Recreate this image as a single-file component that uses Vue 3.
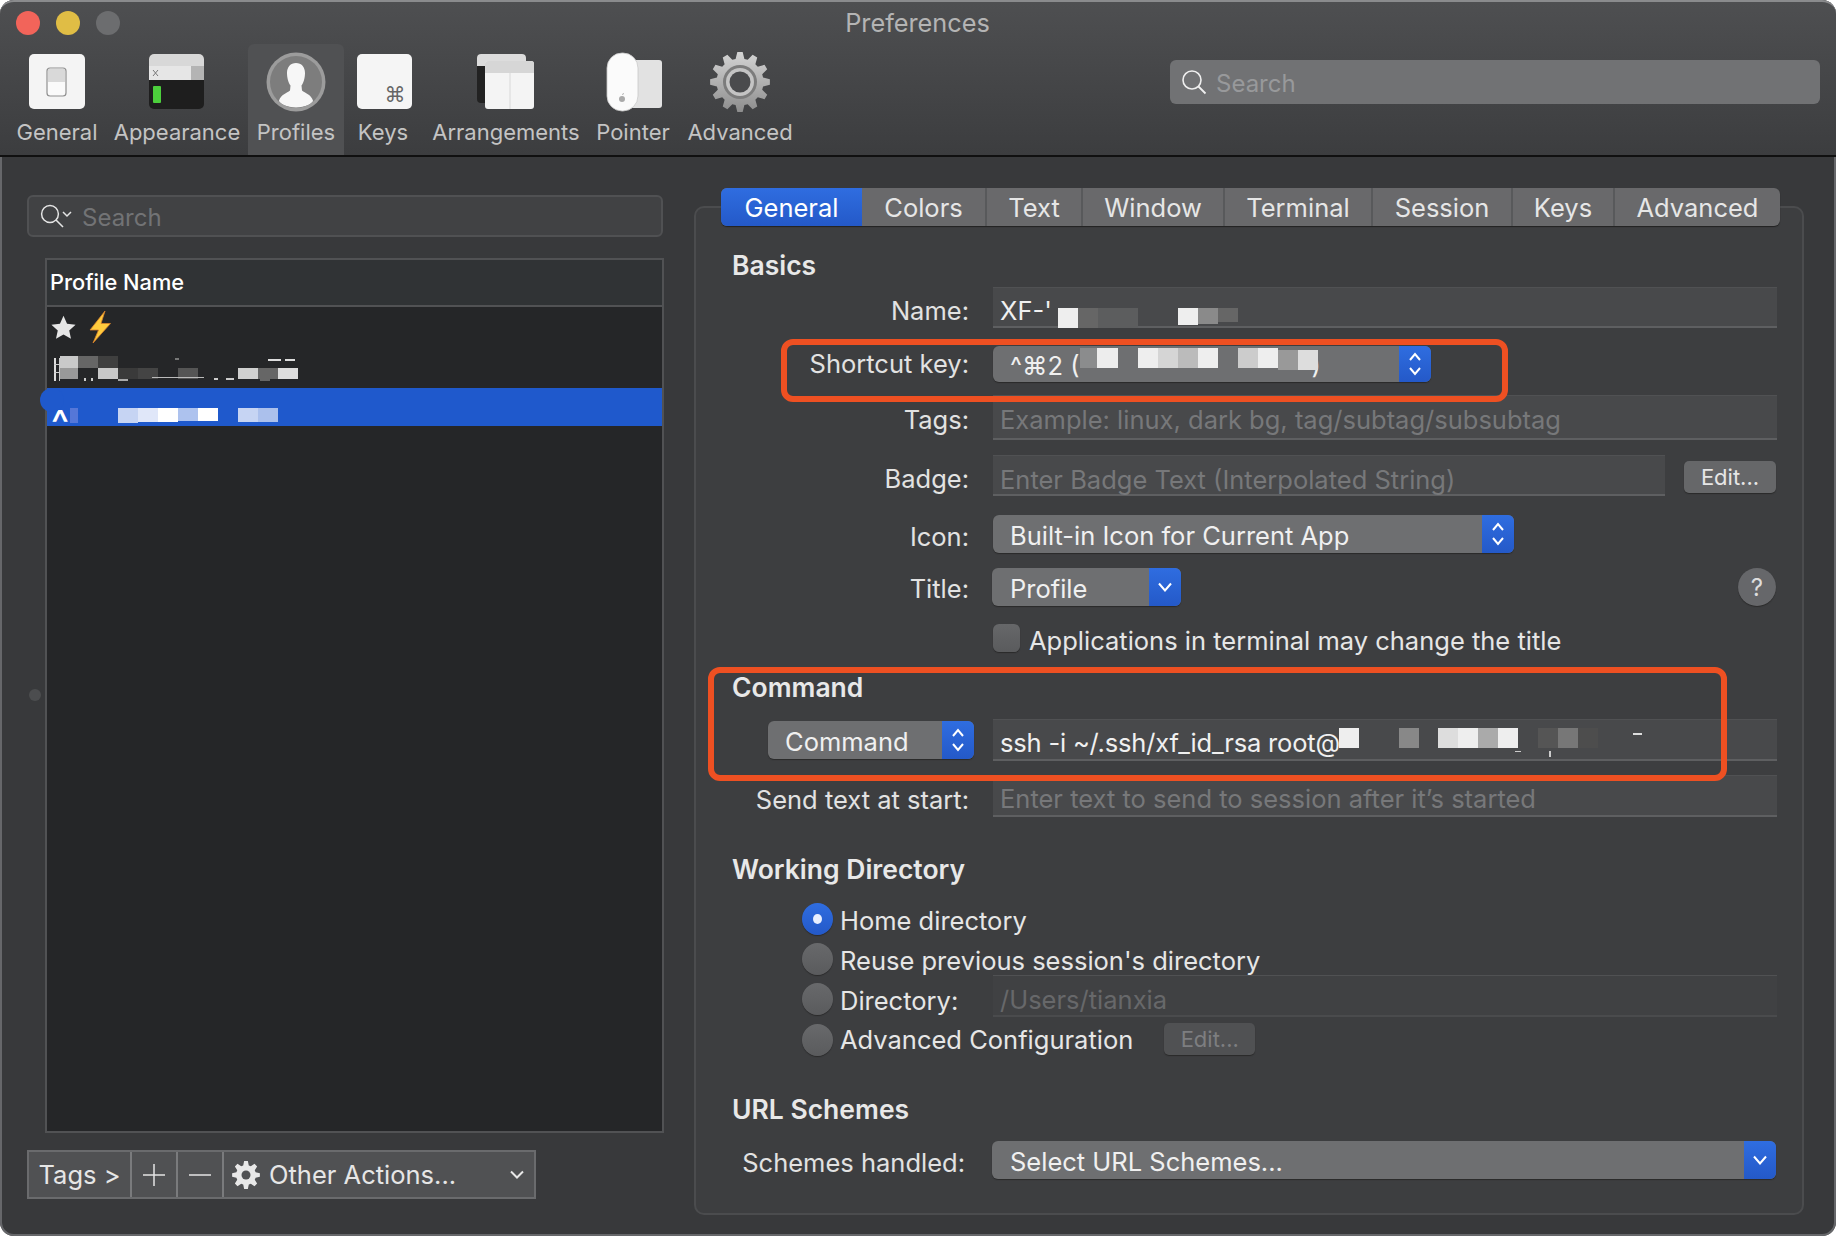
<script setup>
const tools = [
  { name: 'General', w: 98 }, { name: 'Appearance', w: 142 }, { name: 'Profiles', w: 96, active: true },
  { name: 'Keys', w: 78 }, { name: 'Arrangements', w: 168 }, { name: 'Pointer', w: 86 }, { name: 'Advanced', w: 128 }
]
const tabs = [
  { name: 'General', w: 141, active: true }, { name: 'Colors', w: 125 }, { name: 'Text', w: 96 }, { name: 'Window', w: 142 },
  { name: 'Terminal', w: 148 }, { name: 'Session', w: 140 }, { name: 'Keys', w: 102 }, { name: 'Advanced', w: 165 }
]
function gear(cx, cy, ro, ri, n) {
  const pts = []
  const step = (Math.PI * 2) / n
  for (let i = 0; i < n; i++) {
    const a = i * step - Math.PI / 2
    const p = (r, d) => `${(cx + r * Math.cos(a + d)).toFixed(2)} ${(cy + r * Math.sin(a + d)).toFixed(2)}`
    pts.push(p(ri, -step * 0.36), p(ro, -step * 0.17), p(ro, step * 0.17), p(ri, step * 0.36))
  }
  return 'M' + pts.join('L') + 'Z'
}
const bigGear = gear(30, 30, 30, 23.5, 12)
const smallGear = gear(14, 14, 14, 10, 8)
const mosaic = [
  [60, 356, 18, 12, '#c9c9c9'], [78, 356, 20, 12, '#666'], [98, 356, 20, 12, '#3f3f3f'],
  [60, 368, 18, 11, '#999'], [98, 368, 20, 11, '#c8c8c8'], [118, 368, 20, 11, '#3a3a3a'], [138, 368, 20, 11, '#444'], [178, 368, 20, 11, '#555'],
  [238, 368, 20, 11, '#d0d0d0'], [258, 368, 20, 11, '#666'], [278, 368, 20, 11, '#ddd'],
  [54, 358, 2, 23, '#ddd'], [59, 358, 1, 23, '#ccc'], [54, 364, 6, 1, '#ccc'], [54, 372, 6, 1, '#ccc'],
  [268, 359, 13, 2, '#ddd'], [285, 359, 10, 2, '#ddd'], [175, 358, 4, 2, '#777'],
  [84, 378, 2, 3, '#ccc'], [91, 378, 2, 3, '#ccc'], [118, 379, 10, 2, '#aaa'], [152, 377, 52, 1, '#bbb'], [214, 378, 4, 2, '#ccc'], [226, 378, 8, 2, '#ccc'], [260, 379, 10, 2, '#666'],
  [70, 408, 8, 15, '#5577d8'], [118, 408, 20, 15, '#c6d4f3'], [138, 408, 20, 14, '#e0e7f9'], [158, 408, 20, 14, '#fff'],
  [178, 408, 20, 13, '#adc2ee'], [198, 408, 20, 13, '#fff'], [238, 408, 20, 14, '#c6d4f3'], [258, 408, 20, 14, '#abc0ec'],
  [1058, 308, 20, 20, '#eee'], [1078, 308, 20, 20, '#666'], [1098, 308, 40, 20, '#5c5d5e'],
  [1178, 308, 20, 17, '#eee'], [1198, 308, 20, 16, '#8a8a8a'], [1218, 308, 20, 14, '#666'],
  [1097, 348, 21, 20, '#ededed'], [1080, 348, 17, 20, '#8b8c8d'], [1138, 348, 20, 20, '#eee'], [1158, 348, 20, 20, '#d5d5d5'], [1178, 348, 20, 20, '#bbb'],
  [1198, 348, 20, 20, '#eee'], [1238, 348, 20, 20, '#ccc'], [1258, 348, 20, 20, '#eee'], [1278, 350, 20, 20, '#999'], [1298, 350, 20, 20, '#ddd'],
  [1339, 728, 20, 20, '#eee'], [1399, 728, 20, 20, '#888'], [1438, 728, 20, 20, '#ddd'], [1458, 728, 20, 20, '#eee'],
  [1478, 728, 20, 20, '#aaa'], [1498, 728, 20, 20, '#eee'], [1538, 728, 20, 20, '#555'], [1558, 728, 20, 20, '#777'],
  [1578, 728, 20, 20, '#4d4d4d'], [1633, 733, 9, 2, '#ddd'], [1515, 751, 6, 1, '#ccc'], [1549, 751, 2, 6, '#ccc']
]
const blockStyle = (b) => ({ left: b[0] + 'px', top: b[1] + 'px', width: b[2] + 'px', height: b[3] + 'px', background: b[4] })
</script>

<template>
  <div class="window">
    <header class="toolbar">
      <div class="titlebar">
        <span class="light red"></span><span class="light yellow"></span><span class="light gray"></span>
        <span class="wintitle">Preferences</span>
      </div>
      <div class="toolrow">
        <div v-for="t in tools" :key="t.name" class="tool" :class="{ active: t.active }" :style="{ width: t.w + 'px' }">
          <svg class="toolicon" viewBox="0 0 60 60" width="60" height="60">
            <template v-if="t.name === 'General'">
              <rect x="2" y="2" width="56" height="55" rx="5" fill="#f4f4f4" />
              <rect x="20" y="16" width="19" height="28" rx="3" fill="#fafafa" stroke="#8f8f8f" stroke-width="1.2" />
              <path d="M21 17h17v13H21z" fill="#d9d9d9" />
            </template>
            <template v-else-if="t.name === 'Appearance'">
              <rect x="2" y="2" width="55" height="55" rx="5" fill="#1e1e1e" />
              <path d="M2 14V7a5 5 0 0 1 5-5h45a5 5 0 0 1 5 5v7z" fill="#d8d8d8" />
              <rect x="2" y="14" width="42" height="14" fill="#e6e6e6" />
              <rect x="44" y="14" width="13" height="14" fill="#b4b4b4" />
              <path d="M6 18l5 6M11 18l-5 6" stroke="#777" stroke-width="1" />
              <rect x="6" y="34" width="8" height="17" rx="1" fill="#4ccf3c" />
            </template>
            <template v-else-if="t.name === 'Profiles'">
              <defs><clipPath id="pc"><circle cx="30" cy="30" r="26" /></clipPath></defs>
              <circle cx="30" cy="30" r="29.5" fill="#9c9c9c" />
              <circle cx="30" cy="30" r="26" fill="#7d7d7d" />
              <path clip-path="url(#pc)" d="M30 11c5.500 0 9 4 9 10 0 5-1.500 10-3.500 12.500l.5 5c3 2.500 9 4 11 10 0 3-8 7-17 7s-17-4-17-7c2-6 8-7.500 11-10l.5-5C22.500 31 21 26 21 21c0-6 3.500-10 9-10z" fill="#f7f7f7" />
            </template>
            <template v-else-if="t.name === 'Keys'">
              <rect x="4" y="2" width="55" height="55" rx="5" fill="#f5f5f5" />
              <text x="42" y="50" text-anchor="middle" class="cmdglyph">⌘</text>
            </template>
            <template v-else-if="t.name === 'Arrangements'">
              <rect x="1" y="2" width="49" height="49" rx="4" fill="#222" />
              <path d="M1 14V6a4 4 0 0 1 4-4h41a4 4 0 0 1 4 4v8z" fill="#dcdcdc" />
              <rect x="9" y="9" width="49" height="48" rx="3" fill="#f4f4f4" />
              <path d="M9 21v-9a3 3 0 0 1 3-3h43a3 3 0 0 1 3 3v9z" fill="#d6d6d6" />
              <path d="M34 21v36" stroke="#d8d8d8" stroke-width="1" />
            </template>
            <template v-else-if="t.name === 'Pointer'">
              <rect x="27" y="8" width="32" height="48" rx="3" fill="#e2e2e2" />
              <rect x="4" y="1" width="31" height="58" rx="15" fill="#fbfbfb" stroke="#c9c9c9" stroke-width="0.8" />
              <circle cx="19" cy="47" r="3" fill="#aaa" />
              <path d="M19 43c0-1 1-2 2-2 0 1-1 2-2 2z" fill="#aaa" />
            </template>
            <template v-else>
              <defs>
                <linearGradient id="gg" x1="0" y1="0" x2="0" y2="1"><stop offset="0" stop-color="#d4d4d4" /><stop offset="1" stop-color="#8d8d8d" /></linearGradient>
              </defs>
              <path :d="bigGear" fill="url(#gg)" />
              <circle cx="30" cy="30" r="17" fill="#7c7c7c" />
              <circle cx="30" cy="30" r="14" fill="#c4c4c4" />
              <circle cx="30" cy="30" r="10.5" fill="#4a4b4d" />
            </template>
          </svg>
          <span class="toollabel">{{ t.name }}</span>
        </div>
        <div class="topsearch">
          <svg viewBox="0 0 26 26" width="26" height="26"><circle cx="11" cy="11" r="9" fill="none" stroke="#efefef" stroke-width="1.6" /><path d="M17.5 17.5l7 7" stroke="#efefef" stroke-width="1.8" /></svg>
          <span class="stext">Search</span>
        </div>
      </div>
    </header>

    <main class="main">
      <aside class="left">
        <div class="leftsearch">
          <svg viewBox="0 0 34 26" width="34" height="26"><circle cx="10" cy="11" r="8.4" fill="none" stroke="#e4e4e4" stroke-width="1.5" /><path d="M16 17l7 7" stroke="#e4e4e4" stroke-width="1.6" /><path d="M23 9l4 4 4-4" fill="none" stroke="#e4e4e4" stroke-width="1.5" /></svg>
          <span class="stext">Search</span>
        </div>
        <div class="list">
          <div class="listhead">Profile Name</div>
          <div class="listrow first">
            <svg viewBox="0 0 24 24" width="25" height="25"><path d="M12 .8l3.4 7.600 8.200.9-6.100 5.500 1.700 8.100L12 18.800l-7.200 4.100 1.700-8.100L.4 9.300l8.200-.9z" fill="#e6e6e6" /></svg>
            <svg class="bolt" viewBox="0 0 24 32" width="24" height="32"><path d="M17 0L2 19h8.500L5 32 22.500 12.500H13z" fill="#ffcb3d" stroke="#d9822b" stroke-width="0.8" /></svg>
          </div>
          <div class="listrow second"></div>
          <div class="listrow selected"><span class="caret">^</span></div>
        </div>
        <div class="actions">
          <div class="act tags">Tags &gt;</div>
          <div class="act sym"><svg viewBox="0 0 22 22" width="22" height="22"><path d="M11 0v22M0 11h22" stroke="#e4e4e4" stroke-width="1.500" /></svg></div>
          <div class="act sym"><svg viewBox="0 0 22 22" width="22" height="22"><path d="M0 11h22" stroke="#e4e4e4" stroke-width="1.500" /></svg></div>
          <div class="act other">
            <svg viewBox="0 0 28 28" width="28" height="28"><path :d="smallGear" fill="#e8e8e8" /><circle cx="14" cy="14" r="4.500" fill="#505153" /></svg>
            <span>Other Actions...</span>
            <svg class="otherchev" viewBox="0 0 14 10" width="14" height="10"><path d="M1 1.500l6 6 6-6" fill="none" stroke="#e8e8e8" stroke-width="2" /></svg>
          </div>
        </div>
      </aside>

      <section class="right">
        <nav class="tabs">
          <div v-for="t in tabs" :key="t.name" class="tab" :class="{ active: t.active }" :style="{ width: t.w + 'px' }">{{ t.name }}</div>
        </nav>
        <div class="panel">
          <h3 class="head basics">Basics</h3>

          <div class="row" style="--h:41px;--mt:7px">
            <label class="lab down">Name:</label>
            <div class="field val namefield">XF-'</div>
          </div>
          <div class="row" style="--h:36px;--mt:18px">
            <label class="lab up">Shortcut key:</label>
            <div class="popup w438"><span class="ptext">^⌘2 (</span><span class="closeparen">)</span>
              <span class="pbtn"><svg viewBox="0 0 14 26" width="14" height="26"><path d="M2 9l5-6 5 6M2 17l5 6 5-6" fill="none" stroke="#fff" stroke-width="2" /></svg></span>
            </div>
          </div>
          <div class="row" style="--h:45px;--mt:13px">
            <label class="lab tagslab">Tags:</label>
            <div class="field ph">Example: linux, dark bg, tag/subtag/subsubtag</div>
          </div>
          <div class="row" style="--h:41px;--mt:15px">
            <label class="lab down">Badge:</label>
            <div class="field ph badge">Enter Badge Text (Interpolated String)</div>
            <button class="btn edit">Edit...</button>
          </div>
          <div class="row" style="--h:38px;--mt:19px">
            <label class="lab low">Icon:</label>
            <div class="popup w520"><span class="ptext">Built-in Icon for Current App</span>
              <span class="pbtn"><svg viewBox="0 0 14 26" width="14" height="26"><path d="M2 9l5-6 5 6M2 17l5 6 5-6" fill="none" stroke="#fff" stroke-width="2" /></svg></span>
            </div>
          </div>
          <div class="row" style="--h:38px;--mt:15px">
            <label class="lab slight">Title:</label>
            <div class="popup w188"><span class="ptext">Profile</span>
              <span class="pbtn"><svg viewBox="0 0 16 10" width="16" height="10"><path d="M2 1.500l6 7 6-7" fill="none" stroke="#fff" stroke-width="2" /></svg></span>
            </div>
            <div class="help">?</div>
          </div>
          <div class="row" style="--h:28px;--mt:18px">
            <div class="checkcell"><span class="check"></span><span class="txt low2">Applications in terminal may change the title</span></div>
          </div>

          <h3 class="head" style="--mt:20px">Command</h3>
          <div class="row" style="--h:42px;--mt:17px">
            <div class="popup w206 cmd"><span class="ptext">Command</span>
              <span class="pbtn"><svg viewBox="0 0 14 26" width="14" height="26"><path d="M2 9l5-6 5 6M2 17l5 6 5-6" fill="none" stroke="#fff" stroke-width="2" /></svg></span>
            </div>
            <div class="field val cmdfield">ssh -i ~/.ssh/xf_id_rsa root@</div>
          </div>
          <div class="row" style="--h:42px;--mt:14px">
            <label class="lab down">Send text at start:</label>
            <div class="field ph">Enter text to send to session after it’s started</div>
          </div>

          <h3 class="head" style="--mt:37px">Working Directory</h3>
          <div class="row radio" style="--h:32px;--mt:18px"><span class="dot on"></span><span class="txt low2">Home directory</span></div>
          <div class="row radio" style="--h:32px;--mt:8px"><span class="dot"></span><span class="txt low2">Reuse previous session's directory</span></div>
          <div class="row radio" style="--h:42px;--mt:1px">
            <span class="dot dirdot"></span><span class="txt dirlabel">Directory:</span>
            <div class="field ph dim">/Users/tianxia</div>
          </div>
          <div class="row radio" style="--h:33px;--mt:5px">
            <span class="dot"></span><span class="txt low1">Advanced Configuration</span>
            <button class="btn disabled">Edit...</button>
          </div>

          <h3 class="head" style="--mt:39px">URL Schemes</h3>
          <div class="row" style="--h:38px;--mt:17px">
            <label class="lab schemes">Schemes handled:</label>
            <div class="popup wfull"><span class="ptext">Select URL Schemes...</span>
              <span class="pbtn"><svg viewBox="0 0 16 10" width="16" height="10"><path d="M2 1.500l6 7 6-7" fill="none" stroke="#fff" stroke-width="2" /></svg></span>
            </div>
          </div>
        </div>
      </section>
    </main>

    <div v-for="(b, i) in mosaic" :key="i" class="block" :style="blockStyle(b)"></div>
    <span class="sidedot"></span>
    <span class="seldot"></span>
    <div class="redbox one"></div>
    <div class="redbox two"></div>
  </div>
</template>

<style>
html, body { margin: 0; background: #fff; overflow: hidden; }
</style>

<style scoped>
* { box-sizing: border-box; }
.window {
  position: relative; width: 1836px; height: 1236px; overflow: hidden;
  display: flex; flex-direction: column;
  border-radius: 14px; background: #38393b; color: #e2e2e2;
  font-family: Inter, "Noto Sans", sans-serif; font-size: 25.5px;
  box-shadow: inset 0 0 0 2px #66676a;
}
.toolbar {
  height: 157px; flex: none; border-bottom: 2px solid #101010;
  background: linear-gradient(#4e4f51, #3c3d3f);
  border-top: 2px solid #8a8b8d; border-radius: 14px 14px 0 0;
}
.titlebar { height: 42px; position: relative; display: flex; align-items: center; padding-left: 16px; gap: 16px; }
.light { width: 24px; height: 24px; border-radius: 50%; }
.red { background: #f2645a; } .yellow { background: #e0bd45; } .gray { background: #6c6d6f; }
.wintitle { position: absolute; left: -1px; right: 0; top: 4px; text-align: center; color: #b4b4b4; font-size: 25.3px; line-height: 34px; }
.toolrow { display: flex; padding-left: 8px; height: 111px; }
.tool { display: flex; flex-direction: column; align-items: center; height: 111px; border-radius: 6px 6px 0 0; }
.tool.active { background: #505153; }
.toolicon { margin-top: 8px; flex: none; }
.cmdglyph { font-family: "DejaVu Sans", sans-serif; font-size: 21px; fill: #666; }
.toollabel { margin-top: 6px; font-size: 22px; line-height: 28px; color: #c4c4c4; white-space: nowrap; }
.topsearch {
  margin-left: auto; margin-right: 16px; margin-top: 16px; width: 650px; height: 44px;
  background: #717274; border-radius: 6px; display: flex; align-items: center; padding-left: 11px; gap: 9px;
  color: #98999b; font-size: 24px;
}
.stext { padding-top: 2px; }
.main { flex: 1; display: flex; min-height: 0; }
.left { width: 694px; flex: none; padding: 38px 0 0 27px; }
.leftsearch {
  width: 636px; height: 42px; border: 2px solid #505153; border-radius: 6px; background: #414244;
  display: flex; align-items: center; padding-left: 11px; gap: 8px; color: #727375; font-size: 24px;
}
.list { margin: 21px 0 0 18px; width: 619px; height: 875px; border: 2px solid #515254; background: #252628; position: relative; }
.listhead { height: 47px; background: #303335; border-bottom: 2px solid #515254; padding-left: 3px; color: #fff; font-size: 21.8px; font-weight: 500; line-height: 44px; }
.listrow { height: 40px; }
.listrow.first { display: flex; align-items: center; padding-left: 4px; gap: 12px; }
.bolt { margin-top: -1px; }
.listrow.second { height: 41px; }
.listrow.selected { height: 38px; background: #1f59cc; color: #fff; padding-left: 4px; }
.caret { display: block; height: 38px; font-size: 38px; line-height: 70px; font-weight: 500; }
.actions { margin-top: 17px; width: 509px; height: 49px; display: flex; border: 2px solid #6a6b6d; background: #505153; color: #e6e6e6; }
.act { display: flex; align-items: center; justify-content: center; border-right: 2px solid #7a7b7d; height: 100%; }
.tags { width: 103px; }
.sym { width: 46px; }
.other { flex: 1; border-right: 0; justify-content: flex-start; padding-left: 8px; gap: 9px; position: relative; }
.otherchev { margin-left: auto; margin-right: 10px; }
.right { flex: 1; padding-top: 31px; }
.tabs { display: flex; margin-left: 27px; height: 38px; position: relative; z-index: 1; background: #69696b; width: 1059px; border-radius: 6px; overflow: hidden; box-shadow: 0 1px 1px #222; }
.tab { display: flex; align-items: center; justify-content: center; border-right: 2px solid #58595b; color: #e6e6e6; }
.tab:last-child { border-right: 0; }
.tab.active { background: linear-gradient(#2f6de0, #2459c8); color: #fff; border-right: 0; }
.panel {
  margin-top: -20px; width: 1110px; height: 1009px; border: 2px solid #4b4c4e; border-radius: 10px;
  background: #3d3e40; padding: 42px 25px 0 0;
}
.head { margin: var(--mt, 0) 0 0; padding-left: 36px; height: 30px; line-height: 30px; font-size: 26.5px; font-weight: 600; color: #e8e8e8; }
.row { display: flex; align-items: center; height: var(--h); margin-top: var(--mt); }
.lab { width: 273px; flex: none; text-align: right; margin-right: 24px; color: #e2e2e2; white-space: nowrap; }
.lab.down { padding-top: 6px; }
.lab.up { padding-bottom: 2px; }
.lab.tagslab { padding-top: 4px; }
.lab.low { padding-top: 4px; }
.lab.slight { padding-top: 2px; }
.lab.schemes { padding-right: 4px; padding-top: 4px; margin-right: 23px; }
.field {
  flex: 1; height: 100%; background: #48494b; border-top: 1px solid #505153; border-bottom: 2px solid #5e5f61;
  padding: 5px 0 0 7px; display: flex; align-items: center; white-space: nowrap;
}
.namefield { padding-top: 7px; }
.val { color: #f0f0f0; }
.ph { color: #77787a; }
.badge { flex: none; width: 672px; padding-top: 8px; }
.dim { background: #404143; border-bottom-color: #4a4b4d; color: #67686a; padding-top: 7px; }
.btn {
  font: inherit; border: 0; background: #666769; color: #e6e6e6; border-radius: 5px; box-shadow: 0 1px 1px #2a2a2a; padding: 0; font-size: 22px;
}
.edit { width: 92px; height: 32px; margin-left: 19px; margin-top: 3px; }
.disabled { width: 91px; height: 32px; background: #505153; color: #7d7e80; margin-left: 31px; }
.popup {
  position: relative; height: 38px; flex: none; background: #6e6f71; border-radius: 6px; display: flex; align-items: center;
  padding-left: 17px; color: #f0f0f0; overflow: hidden; box-shadow: 0 1px 1px #2a2a2a;
}
.ptext { white-space: nowrap; padding-top: 2px; }
.closeparen { margin-left: 232px; }
.pbtn {
  position: absolute; right: 0; top: 0; bottom: 0; width: 32px; display: flex; align-items: center; justify-content: center;
  background: linear-gradient(#2f6de0, #2459c8);
}
.w438 { width: 438px; height: 36px; }
.w520 { width: 521px; }
.w188 { width: 189px; margin-left: -1px; padding-left: 18px; }
.w206 { width: 206px; margin-left: 72px; }
.wfull { width: 784px; padding-left: 18px; }
.cmdfield { margin-left: 19px; letter-spacing: -0.19px; }
.help { margin-left: auto; width: 38px; height: 38px; margin-right: 1px; border-radius: 50%; background: #66676a; color: #ddd; display: flex; align-items: center; justify-content: center; font-size: 24px; box-shadow: 0 1px 1px #2a2a2a; }
.checkcell { display: flex; align-items: center; margin-left: 297px; gap: 9px; }
.check { width: 27px; height: 28px; background: linear-gradient(#666769, #5a5b5d); border-radius: 6px; box-shadow: 0 1px 1px #2a2a2a; }
.txt { color: #e6e6e6; white-space: nowrap; }
.low2 { padding-top: 4px; }
.low1 { padding-top: 2px; }
.radio { padding-left: 106px; }
.dot { width: 31px; height: 32px; flex: none; border-radius: 50%; margin: 2px 7px 0 0; background: linear-gradient(#68696b, #5a5b5d); box-shadow: 0 1px 1px #2a2a2a; display: block; position: relative; }
.dot.dirdot { margin-top: 5px; }
.dot.on { background: linear-gradient(#2f6de0, #2459c8); }
.dot.on::after { content: ""; position: absolute; left: 11px; top: 11px; width: 9px; height: 10px; border-radius: 50%; background: #e8efff; }
.dirlabel { width: 153px; flex: none; padding-top: 9px; }
.block { position: absolute; }
.sidedot { position: absolute; left: 29px; top: 689px; width: 12px; height: 12px; border-radius: 50%; background: #4c4d4f; }
.seldot { position: absolute; left: 40px; top: 388px; width: 24px; height: 24px; border-radius: 50%; background: #1f59cc; }
.redbox { position: absolute; border: 6px solid #ee5022; border-radius: 12px; }
.redbox.one { left: 781px; top: 339px; width: 727px; height: 63px; }
.redbox.two { left: 708px; top: 667px; width: 1019px; height: 114px; }
</style>
